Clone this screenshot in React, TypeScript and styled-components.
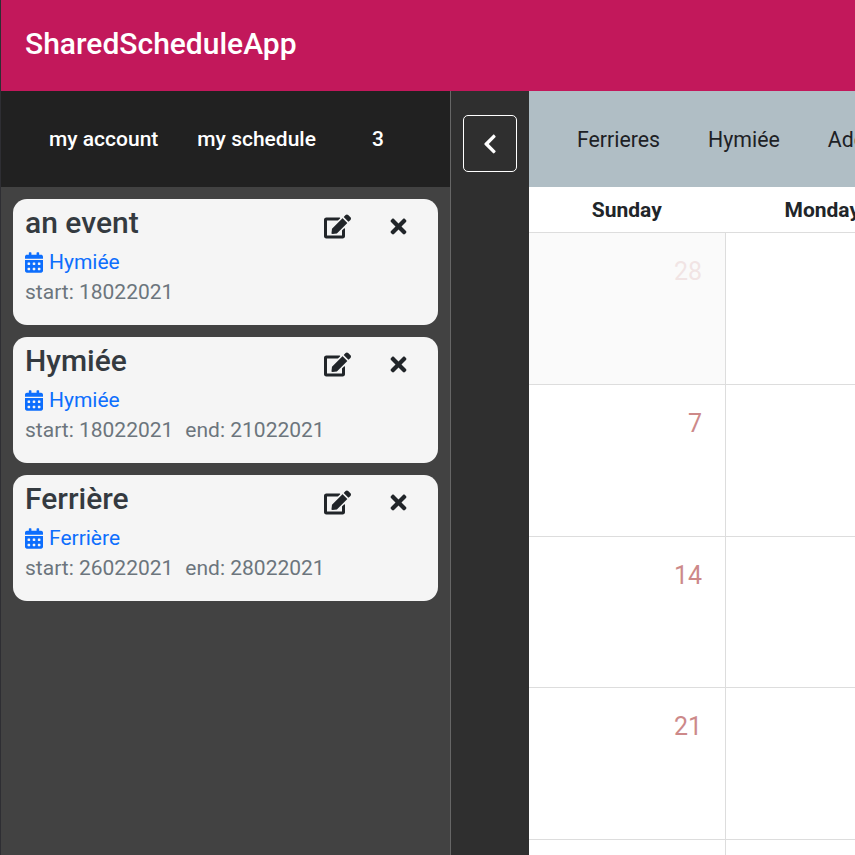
import React from "react";
import styled, { createGlobalStyle } from "styled-components";
import { FaCalendarAlt, FaChevronLeft, FaEdit, FaTimes } from "react-icons/fa";

const events = [
  { title: "an event", calendar: "Hymiée", start: "18022021" },
  { title: "Hymiée", calendar: "Hymiée", start: "18022021", end: "21022021" },
  { title: "Ferrière", calendar: "Ferrière", start: "26022021", end: "28022021" },
];

const weeks = [
  { day: "28", outside: true },
  { day: "7" },
  { day: "14" },
  { day: "21" },
  { day: "28" },
];

export default function App() {
  return (
    <>
      <GlobalStyle />
      <Page>
        <Header>SharedScheduleApp</Header>
        <Body>
          <Sidebar>
            <SideNav>
              <SideLink>my account</SideLink>
              <SideLink>my schedule</SideLink>
              <SideCount>3</SideCount>
            </SideNav>
            <EventList>
              {events.map((event) => (
                <EventCard key={event.title}>
                  <CardTop>
                    <EventTitle>{event.title}</EventTitle>
                    <CardActions>
                      <FaEdit size={27} />
                      <CloseIcon size={23} />
                    </CardActions>
                  </CardTop>
                  <CalendarLink>
                    <CalendarIcon />
                    {event.calendar}
                  </CalendarLink>
                  <Dates>
                    <span>start: {event.start}</span>
                    {event.end && <span>end: {event.end}</span>}
                  </Dates>
                </EventCard>
              ))}
            </EventList>
          </Sidebar>
          <ToggleColumn>
            <ToggleButton>
              <FaChevronLeft size={22} />
            </ToggleButton>
          </ToggleColumn>
          <Main>
            <Tabs>
              <Tab>Ferrieres</Tab>
              <Tab>Hymiée</Tab>
              <Tab>Adding</Tab>
            </Tabs>
            <WeekHead>
              <WeekDay>Sunday</WeekDay>
              <WeekDay>Monday</WeekDay>
            </WeekHead>
            {weeks.map((week, index) => (
              <WeekRow key={index}>
                <DayCell $outside={week.outside}>
                  <DayNumber $outside={week.outside}>{week.day}</DayNumber>
                </DayCell>
                <DayCell />
              </WeekRow>
            ))}
          </Main>
        </Body>
      </Page>
    </>
  );
}

const GlobalStyle = createGlobalStyle`
  html, body {
    margin: 0;
    height: 100%;
    overflow: hidden;
    background: #fff;
    font-family: Roboto, "Liberation Sans", sans-serif;
  }
`;

const Page = styled.div`
  width: 855px;
  height: 855px;
  display: flex;
  flex-direction: column;
  overflow: hidden;
  border-left: 1px solid #2e2e33;
  box-sizing: border-box;
`;

const Header = styled.header`
  flex: 0 0 91px;
  display: flex;
  align-items: center;
  padding: 0 0 4px 24px;
  box-sizing: border-box;
  background: #c2185b;
  color: #fff;
  font-size: 30px;
  font-weight: 500;
`;

const Body = styled.div`
  flex: 1;
  display: flex;
  min-height: 0;
`;

const Sidebar = styled.aside`
  flex: 0 0 450px;
  box-sizing: border-box;
  background: #424242;
  border-right: 1px solid #666;
`;

const SideNav = styled.nav`
  height: 96px;
  display: flex;
  align-items: center;
  gap: 1px;
  padding-left: 29px;
  background: #212121;
  color: #fff;
  font-size: 21px;
  font-weight: 500;
`;

const SideLink = styled.span`
  padding: 0 19px;
`;

const SideCount = styled.span`
  padding-left: 36px;
`;

const EventList = styled.div`
  display: flex;
  flex-direction: column;
  gap: 12px;
  padding: 12px 12px 0 12px;
`;

const EventCard = styled.article`
  height: 126px;
  box-sizing: border-box;
  padding: 5px 12px 0;
  background: #f5f5f5;
  border-radius: 14px;
`;

const CardTop = styled.div`
  display: flex;
  justify-content: space-between;
  align-items: flex-start;
  height: 43px;
`;

const EventTitle = styled.h3`
  margin: 0;
  font-size: 30px;
  line-height: 38px;
  font-weight: 500;
  color: #343a40;
`;

const CardActions = styled.div`
  display: flex;
  align-items: center;
  gap: 36px;
  padding: 9px 16px 0 0;
  color: #212529;
`;

const CloseIcon = styled(FaTimes)`
  flex: none;
`;

const CalendarIcon = styled(FaCalendarAlt)`
  flex: none;
  width: 18px;
  height: 21px;
`;

const CalendarLink = styled.div`
  display: flex;
  align-items: center;
  gap: 6px;
  height: 30px;
  font-size: 21px;
  color: #0d6efd;
`;

const Dates = styled.div`
  display: flex;
  gap: 12px;
  height: 30px;
  align-items: center;
  font-size: 21px;
  color: #6c757d;
`;

const ToggleColumn = styled.div`
  flex: 0 0 78px;
  display: flex;
  justify-content: center;
  align-items: flex-start;
  padding-top: 24px;
  box-sizing: border-box;
  background: #2f2f2f;
`;

const ToggleButton = styled.button`
  width: 54px;
  height: 57px;
  display: flex;
  align-items: center;
  justify-content: center;
  padding: 0 1px 0 0;
  background: transparent;
  border: 1px solid #fff;
  border-radius: 5px;
  color: #fff;
`;

const Main = styled.main`
  flex: 1;
  min-width: 0;
  overflow: hidden;
  background: #fff;
`;

const Tabs = styled.nav`
  height: 96px;
  display: flex;
  align-items: center;
  padding-left: 24px;
  background: #b0bec5;
  color: #1d2125;
  font-size: 21.3px;
  white-space: nowrap;
`;

const Tab = styled.span`
  padding: 0 24px;
`;

const WeekHead = styled.div`
  display: flex;
  height: 46px;
  box-sizing: border-box;
  border-bottom: 1px solid #ddd;
`;

const WeekDay = styled.div`
  flex: 0 0 195.5px;
  display: flex;
  align-items: center;
  justify-content: center;
  font-size: 21px;
  font-weight: 700;
  color: #212529;
  white-space: nowrap;
`;

const WeekRow = styled.div`
  display: flex;
  height: 151.8px;
  box-sizing: border-box;
  border-bottom: 1px solid #ddd;
`;

const DayCell = styled.div<{ $outside?: boolean }>`
  flex: 0 0 197px;
  box-sizing: border-box;
  display: flex;
  justify-content: flex-end;
  padding: 24px 23px 0 0;
  background: ${(p) => (p.$outside ? "#fafafa" : "#fff")};
  &:first-child {
    flex-basis: 196px;
  }
  & + & {
    border-left: 1px solid #ddd;
  }
`;

const DayNumber = styled.span<{ $outside?: boolean }>`
  font-size: 25px;
  line-height: 30px;
  color: #a52a2a;
  opacity: ${(p) => (p.$outside ? 0.1 : 0.55)};
`;
